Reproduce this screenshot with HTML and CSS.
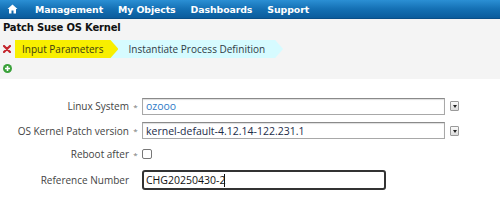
FILE: index.html
```html
<!DOCTYPE html>
<html>
<head>
<meta charset="utf-8">
<link rel="stylesheet" href="styles.css">
</head>
<body>
<nav class="topbar">
  <span class="home"><svg width="11" height="10" viewBox="0 0 11 10"><path d="M5.5 0.5 L0.5 5 L2 5 L2 9.5 L4.5 9.5 L4.5 6.5 L6.5 6.5 L6.5 9.5 L9 9.5 L9 5 L10.5 5 Z" fill="#fff"/></svg></span>
  <a class="nav-link">Management</a>
  <a class="nav-link">My Objects</a>
  <a class="nav-link">Dashboards</a>
  <a class="nav-link">Support</a>
</nav>
<div class="head-area">
  <div class="title">Patch Suse OS Kernel</div>
  <div class="crumbs">
    <span class="close-icon"><svg width="8" height="8" viewBox="0 0 8 8"><path d="M1 1 L7 7 M7 1 L1 7" stroke="#c4262e" stroke-width="2.2" stroke-linecap="round"/></svg></span>
    <div class="steps">
      <span class="step step-active">Input Parameters</span>
      <span class="step step-next">Instantiate Process Definition</span>
    </div>
  </div>
  <div class="add-row">
    <span class="add-icon"><svg width="9" height="9" viewBox="0 0 9 9"><circle cx="4.5" cy="4.5" r="4.5" fill="#3aa13a"/><path d="M4.5 2 V7 M2 4.5 H7" stroke="#fff" stroke-width="1.6"/></svg></span>
  </div>
</div>
<form class="form">
  <div class="row row-1">
    <label class="lbl">Linux System</label><span class="req">*</span>
    <div class="field"><span class="input wide blue">ozooo</span><span class="dd"></span></div>
  </div>
  <div class="row row-2">
    <label class="lbl">OS Kernel Patch version</label><span class="req">*</span>
    <div class="field"><span class="input wide dark">kernel-default-4.12.14-122.231.1</span><span class="dd"></span></div>
  </div>
  <div class="row row-3">
    <label class="lbl">Reboot after</label><span class="req">*</span>
    <div class="field"><span class="checkbox"></span></div>
  </div>
  <div class="row row-4">
    <label class="lbl">Reference Number</label><span class="req"></span>
    <div class="field"><span class="input ref">CHG20250430-2<span class="caret"></span></span></div>
  </div>
</form>
</body>
</html>
```
FILE: styles.css
```css
* { box-sizing: border-box; }
html, body { margin: 0; padding: 0; background: #fff; }
body { font-family: "Open Sans", "Noto Sans", sans-serif; font-size: 10px; color: #333; width: 500px; height: 216px; overflow: hidden; }

.topbar {
  height: 19px;
  background: linear-gradient(#2b8fd4, #1470b4 50%, #0b5c9c);
  display: flex;
  align-items: center;
  padding-left: 7px;
  border-bottom: 1px solid #0a4f88;
}
.home { display: flex; width: 28px; margin-top: -1px; }
.nav-link {
  color: #fff;
  font-family: "DejaVu Sans", sans-serif;
  font-weight: bold;
  font-size: 9.4px;
  margin-right: 15px;
  letter-spacing: -0.1px;
}

.head-area { background: #f4f4f4; height: 60px; padding-top: 2px; }
.title { font-family: "DejaVu Sans", sans-serif; font-weight: bold; font-size: 10px; color: #111; padding-left: 3px; height: 17px; line-height: 14px; letter-spacing: -0.2px; }
.crumbs { display: flex; align-items: center; height: 18px; margin-top: 2px; padding-left: 3px; }
.close-icon { display: flex; width: 12px; }
.steps { display: flex; height: 18px; }
.step {
  display: flex; align-items: center; height: 18px; font-size: 10px; color: #333;
}
.step-active {
  background: #f8ef00;
  padding: 0 15px 0 7px;
  clip-path: polygon(0 0, calc(100% - 8px) 0, 100% 50%, calc(100% - 8px) 100%, 0 100%);
  position: relative; z-index: 1;
  color: #3b3b12;
}
.step-next {
  background: #d6fbff;
  margin-left: -10px;
  padding: 0 18px 0 20px;
  clip-path: polygon(0 0, calc(100% - 8px) 0, 100% 50%, calc(100% - 8px) 100%, 0 100%);
  color: #2f3a45;
}
.add-row { height: 21px; display: flex; align-items: center; padding-left: 3px; }
.add-icon { display: flex; }

.form { padding-top: 18px; }
.row { display: flex; align-items: center; }
.lbl { width: 129px; text-align: right; color: #444; }
.req { width: 13px; text-align: center; font-size: 8px; color: #777; }
.field { display: flex; align-items: center; }
.input {
  display: flex; align-items: center;
  height: 17px;
  border: 1px solid #a8a8a8;
  border-top-color: #8a8a8a;
  box-shadow: inset 0 1px 1px #ddd;
  background: #fff;
  padding-left: 3px;
  font-size: 10.5px;
}
.wide { width: 303px; }
.blue { color: #2f7bc7; }
.dark { color: #1c2c48; }
.dd {
  width: 9px; height: 10px; margin-left: 5px;
  border: 1px solid #9a9a9a; border-radius: 1px;
  background: linear-gradient(#fafafa, #dcdcdc);
  position: relative;
}
.dd::after {
  content: ""; position: absolute; left: 2px; top: 3px;
  border-left: 2px solid transparent; border-right: 2px solid transparent; border-top: 3px solid #222;
}
.row-1 { height: 18px; }
.row-2 { height: 17px; margin-top: 7px; }
.row-3 { height: 12px; margin-top: 9px; }
.row-4 { height: 20px; margin-top: 10px; }
.checkbox { width: 10px; height: 10px; border: 1px solid #777; border-radius: 2px; background: #fff; }
.ref { width: 244px; height: 20px; border: 2px solid #333; border-radius: 3px; color: #111; padding-left: 2px; box-shadow: none; }
.caret { display: inline-block; width: 1px; height: 13px; background: #111; margin-left: -1px; }
```
